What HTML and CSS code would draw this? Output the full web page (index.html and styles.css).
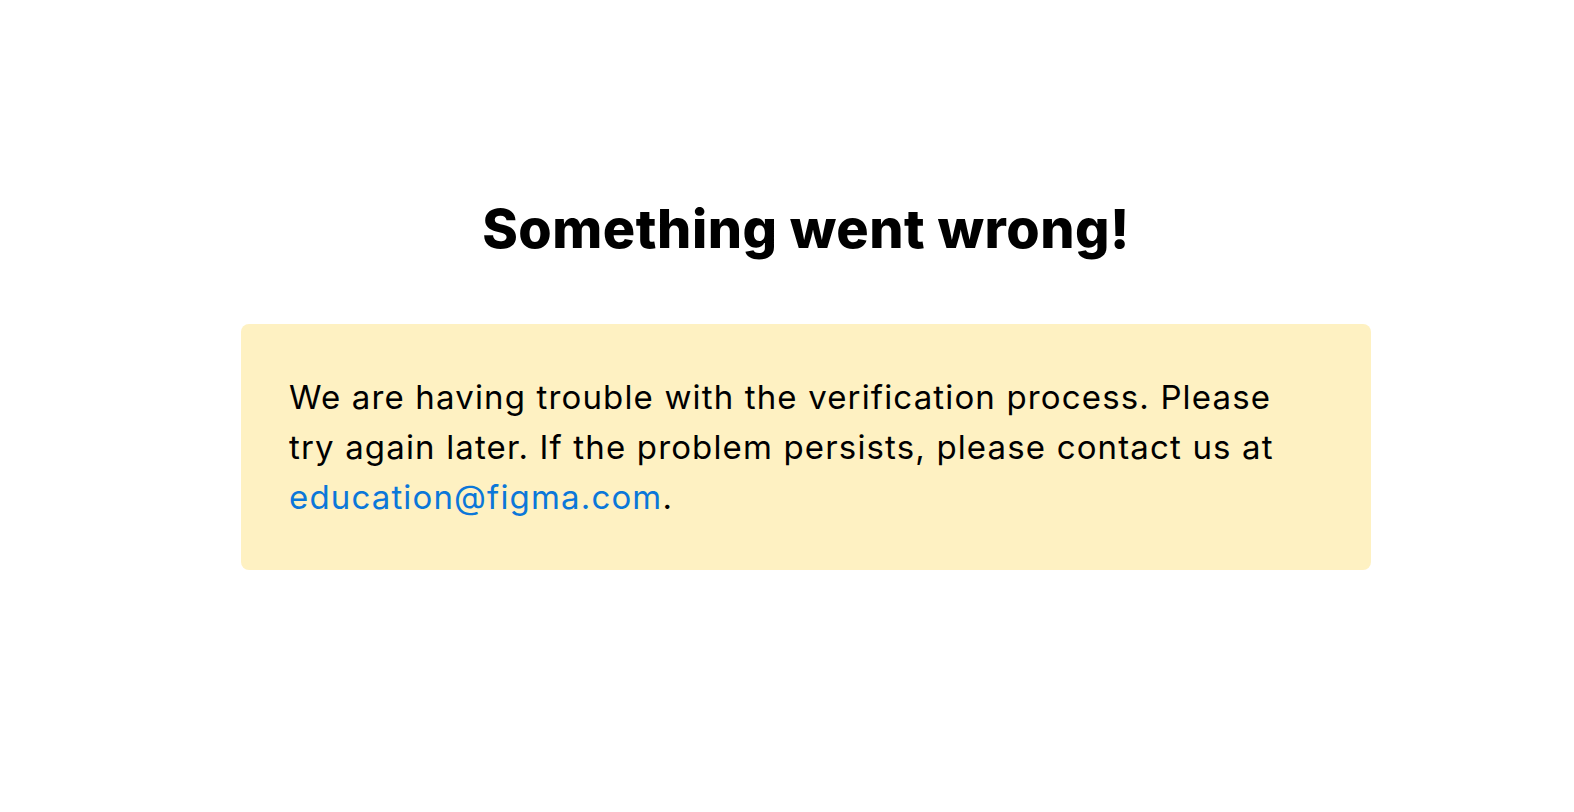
FILE: index.html
```html
<!DOCTYPE html>
<html lang="en">
<head>
<meta charset="utf-8">
<title>Something went wrong!</title>
<link rel="stylesheet" href="styles.css">
</head>
<body>
<main class="page">
  <h1 class="title">Something went wrong!</h1>
  <div class="notice">
    <p class="notice-text">We are having trouble with the verification process. Please try again later. If the problem persists, please contact us at <a class="notice-link" href="mailto:education@figma.com">education@figma.com</a>.</p>
  </div>
</main>
</body>
</html>
```
FILE: styles.css
```css
html, body {
  margin: 0;
  padding: 0;
  background: #ffffff;
}
body {
  font-family: Inter, "Liberation Sans", sans-serif;
  color: #000000;
}
.page {
  display: flex;
  flex-direction: column;
  align-items: center;
  padding: 191px 0 0 38px;
}
.title {
  margin: 0;
  font-size: 54px;
  line-height: 76px;
  font-weight: 800;
  letter-spacing: 0.5px;
}
.notice {
  box-sizing: border-box;
  width: 1130px;
  margin-top: 57px;
  background: #fef1c2;
  border-radius: 8px;
  padding: 48px 48px 48px;
}
.notice-text {
  margin: 0;
  font-size: 33px;
  line-height: 50px;
  font-weight: 400;
  letter-spacing: 1.15px;
}
.notice-link {
  color: #0b77d9;
  text-decoration: none;
}
```
